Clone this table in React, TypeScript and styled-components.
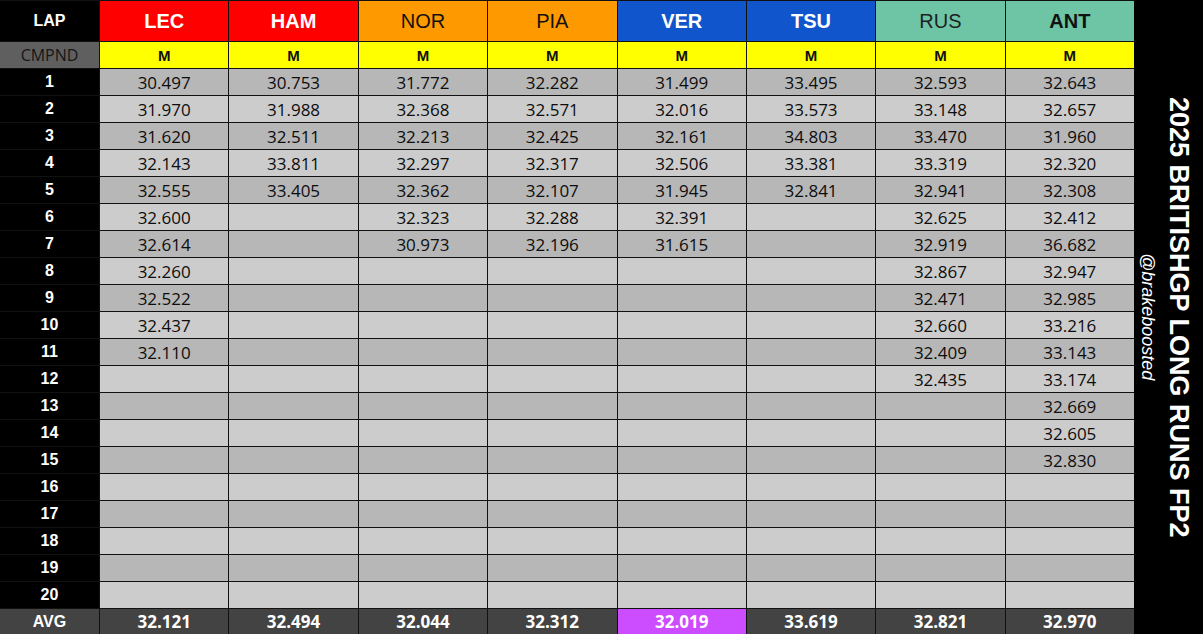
import styled, { createGlobalStyle } from 'styled-components';

const GlobalStyle = createGlobalStyle`
  html, body {
    margin: 0;
    padding: 0;
    background: #000;
    overflow: hidden;
  }
`;

type Driver = {
  code: string;
  bg: string;
  fg: string;
  bold: boolean;
  laps: string[];
  avg: string;
  best?: boolean;
};

const drivers: Driver[] = [
  {
    code: 'LEC', bg: '#ff0000', fg: '#fff', bold: true, avg: '32.121',
    laps: ['30.497', '31.970', '31.620', '32.143', '32.555', '32.600', '32.614', '32.260', '32.522', '32.437', '32.110'],
  },
  {
    code: 'HAM', bg: '#ff0000', fg: '#fff', bold: true, avg: '32.494',
    laps: ['30.753', '31.988', '32.511', '33.811', '33.405'],
  },
  {
    code: 'NOR', bg: '#ff9900', fg: '#111', bold: false, avg: '32.044',
    laps: ['31.772', '32.368', '32.213', '32.297', '32.362', '32.323', '30.973'],
  },
  {
    code: 'PIA', bg: '#ff9900', fg: '#111', bold: false, avg: '32.312',
    laps: ['32.282', '32.571', '32.425', '32.317', '32.107', '32.288', '32.196'],
  },
  {
    code: 'VER', bg: '#1155cc', fg: '#fff', bold: true, avg: '32.019', best: true,
    laps: ['31.499', '32.016', '32.161', '32.506', '31.945', '32.391', '31.615'],
  },
  {
    code: 'TSU', bg: '#1155cc', fg: '#fff', bold: true, avg: '33.619',
    laps: ['33.495', '33.573', '34.803', '33.381', '32.841'],
  },
  {
    code: 'RUS', bg: '#6dc5a6', fg: '#1f1f1f', bold: false, avg: '32.821',
    laps: ['32.593', '33.148', '33.470', '33.319', '32.941', '32.625', '32.919', '32.867', '32.471', '32.660', '32.409', '32.435'],
  },
  {
    code: 'ANT', bg: '#6dc5a6', fg: '#111', bold: true, avg: '32.970',
    laps: ['32.643', '32.657', '31.960', '32.320', '32.308', '32.412', '36.682', '32.947', '32.985', '33.216', '33.143', '33.174', '32.669', '32.605', '32.830'],
  },
];

const LAP_COUNT = 20;

const Page = styled.div`
  display: grid;
  grid-template-columns: 1134px 1fr;
  width: 1203px;
  height: 634px;
  background: #000;
`;

const Table = styled.div`
  display: grid;
  grid-template-columns: 99px repeat(8, 1fr);
  grid-template-rows: 40px repeat(21, 26px) 25px;
  gap: 1px;
  padding-top: 1px;
  background: #111;
`;

const Cell = styled.div`
  display: flex;
  align-items: center;
  justify-content: center;
  white-space: nowrap;
`;

const CornerCell = styled(Cell)`
  background: #000;
  color: #fff;
  font: 700 16px 'Liberation Sans', Arial, sans-serif;
`;

const DriverCell = styled(Cell)<{ $bg: string; $fg: string; $bold: boolean }>`
  background: ${(p) => p.$bg};
  color: ${(p) => p.$fg};
  font-family: 'Liberation Sans', Arial, sans-serif;
  font-size: 20px;
  font-weight: ${(p) => (p.$bold ? 700 : 400)};
`;

const CompoundLabel = styled(Cell)`
  background: #5f5f5f;
  color: #161616;
  font: 400 16px 'Open Sans', sans-serif;
`;

const CompoundCell = styled(Cell)`
  background: #ffff00;
  color: #111;
  font: 700 15px 'Liberation Sans', Arial, sans-serif;
`;

const LapNumber = styled(Cell)`
  background: #000;
  color: #fff;
  font: 700 16px 'Liberation Sans', Arial, sans-serif;
`;

const LapTime = styled(Cell)<{ $odd: boolean }>`
  background: ${(p) => (p.$odd ? '#b7b7b7' : '#cccccc')};
  color: #0d0d0d;
  font: 400 17px 'Open Sans', sans-serif;
`;

const AvgLabel = styled(Cell)`
  background: #434343;
  color: #fff;
  font: 700 16px 'Liberation Sans', Arial, sans-serif;
`;

const AvgCell = styled(Cell)<{ $best?: boolean }>`
  background: ${(p) => (p.$best ? '#cc4cff' : '#434343')};
  color: #fff;
  font: 700 17px 'Open Sans', sans-serif;
`;

const SidePanel = styled.div`
  display: flex;
  align-items: center;
  justify-content: center;
  gap: 8px;
  padding-right: 6px;
  background: #000;
  color: #fff;
`;

const Handle = styled.div`
  writing-mode: vertical-rl;
  font: italic 400 18px 'Liberation Sans', Arial, sans-serif;
  line-height: 1;
`;

const Title = styled.div`
  writing-mode: vertical-rl;
  font: 700 27px 'Liberation Sans', Arial, sans-serif;
  line-height: 1;
  white-space: nowrap;
`;

export default function App() {
  const laps = Array.from({ length: LAP_COUNT }, (_, i) => i);

  return (
    <>
      <GlobalStyle />
      <Page>
        <Table>
          <CornerCell>LAP</CornerCell>
          {drivers.map((d) => (
            <DriverCell key={d.code} $bg={d.bg} $fg={d.fg} $bold={d.bold}>
              {d.code}
            </DriverCell>
          ))}

          <CompoundLabel>CMPND</CompoundLabel>
          {drivers.map((d) => (
            <CompoundCell key={d.code}>M</CompoundCell>
          ))}

          {laps.map((i) => (
            <Row key={i} index={i} />
          ))}

          <AvgLabel>AVG</AvgLabel>
          {drivers.map((d) => (
            <AvgCell key={d.code} $best={d.best}>
              {d.avg}
            </AvgCell>
          ))}
        </Table>
        <SidePanel>
          <Handle>@brakeboosted</Handle>
          <Title>2025 BRITISHGP LONG RUNS FP2</Title>
        </SidePanel>
      </Page>
    </>
  );
}

function Row({ index }: { index: number }) {
  const odd = index % 2 === 0;
  return (
    <>
      <LapNumber>{index + 1}</LapNumber>
      {drivers.map((d) => (
        <LapTime key={d.code} $odd={odd}>
          {d.laps[index] ?? ''}
        </LapTime>
      ))}
    </>
  );
}
